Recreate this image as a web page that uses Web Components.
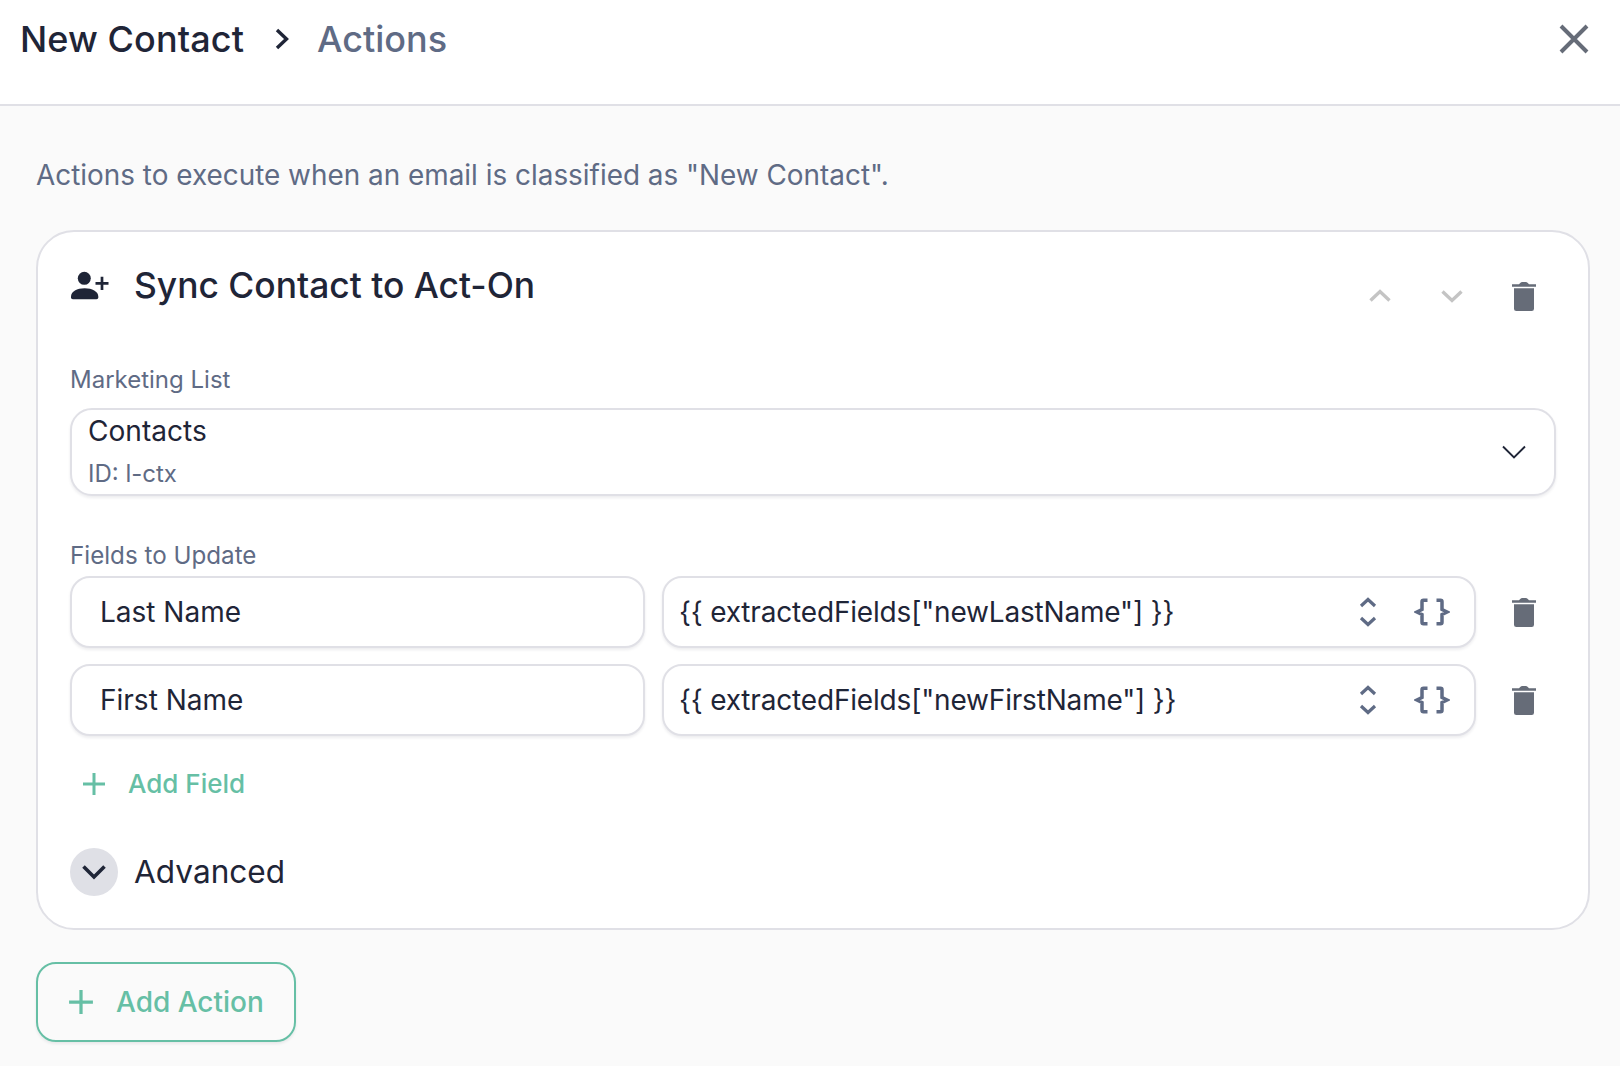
<!DOCTYPE html>
<html><head><meta charset="utf-8">
<style>
html,body{margin:0;padding:0;background:#fafafa;height:100%}
body{font-family:Inter,"Liberation Sans",sans-serif;color:#1f2537;overflow:hidden}
</style></head>
<body>
<template id="i-trash"><svg viewBox="-6 -3 36 36" width="36" height="36" fill="#666c78"><path d="M0 3.200H7l1.200-1.200q1-.9 2-.9h3.600q1 0 2 .9L17 3.200h7v2.600H0z"/><path d="M2 7.200h20v20.500q0 2.300-2.300 2.300H4.300Q2 30 2 27.700z"/></svg></template>
<app-page>
  <app-header slot="header" title="New Contact" sub="Actions"></app-header>
  <p-desc>Actions to execute when an email is classified as "New Contact".</p-desc>
  <action-card heading="Sync Contact to Act-On">
    <field-label>Marketing List</field-label>
    <select-box main="Contacts" sub="ID: l-ctx"></select-box>
    <field-label class="second">Fields to Update</field-label>
    <map-row name="Last Name" value='{{ extractedFields["newLastName"] }}'></map-row>
    <map-row name="First Name" value='{{ extractedFields["newFirstName"] }}'></map-row>
    <add-link>Add Field</add-link>
    <advanced-toggle>Advanced</advanced-toggle>
  </action-card>
  <add-button>Add Action</add-button>
</app-page>
<script>
const TRASH=document.getElementById('i-trash').innerHTML;
const PLUS=(s,w)=>`<svg viewBox="0 0 24 24" width="${s}" height="${s}" fill="none" stroke="#66bfa5" stroke-width="${w}"><path d="M12 1v22M1 12h22"/></svg>`;
function def(name,css,html){
  customElements.define(name,class extends HTMLElement{
    connectedCallback(){
      if(this.shadowRoot)return;
      const r=this.attachShadow({mode:'open'});
      r.innerHTML=`<style>${css}</style>`+html(this);
    }
  });
}
def('app-page',`:host{display:block;height:1066px;box-sizing:border-box}
 main{display:flex;flex-direction:column;align-items:stretch;padding:0 30px 0 36px}`,
 ()=>`<slot name="header"></slot><main><slot></slot></main>`);
def('app-header',`:host{display:flex;align-items:center;height:104px;box-sizing:content-box;background:#fff;border-bottom:2px solid #e0e0e6;padding:0 30px 0 20px;font-size:36px;font-weight:500;line-height:44px}
 .t{color:#1f2537;letter-spacing:.1px}.c{margin:0 25px 0 28px;display:flex}.s{color:#5f6b85}.x{margin-left:auto;display:flex}
 .inner{display:flex;align-items:center;width:100%;margin-top:-26px}`,
 e=>`<div class="inner"><span class="t">${e.getAttribute('title')}</span>
 <span class="c"><svg width="20" height="24" viewBox="0 0 20 24" fill="none" stroke="#1f2537" stroke-width="3.400"><path d="M5 3l9.500 9L5 21"/></svg></span>
 <span class="s">${e.getAttribute('sub')}</span>
 <span class="x"><svg width="32" height="32" viewBox="0 0 32 32" fill="none" stroke="#666c78" stroke-width="4"><path d="M3 3l26 26M29 3L3 29"/></svg></span></div>`);
def('p-desc',`:host{display:block;font-size:27.9px;line-height:40px;color:#5f6b85;margin-top:49px;margin-bottom:35px}`,()=>`<slot></slot>`);
def('action-card',`:host{display:block;background:#fff;border:2px solid #e0e0e6;border-radius:38px;padding:32px 32px 32px 32px}
 .head{display:flex;align-items:flex-start;height:100px}
 .ic{display:flex;width:63px;margin-top:7px;margin-left:1px}
 h2{margin:0;font-size:35.4px;font-weight:500;line-height:44px;color:#1f2537}
 .tools{margin-left:auto;display:flex;align-items:center;gap:36px;margin-top:14px;margin-right:14px}
 .tools svg{display:block}`,
 e=>`<div class="head"><span class="ic"><svg viewBox="0 0 38 30" width="38" height="30" fill="#1f2537"><circle cx="13.300" cy="7.300" r="6.500"/><path d="M0 25.500C0 20.500 6 17.300 13.700 17.300 21 17.300 27.300 20.500 27.300 25.500V26.500Q27.300 28.300 25.500 28.300H1.800Q0 28.300 0 26.500Z"/><path d="M24.500 12.300h13M31 5.700v13.200" fill="none" stroke="#1f2537" stroke-width="2.700"/></svg></span>
 <h2>${e.getAttribute('heading')}</h2>
 <div class="tools"><svg width="36" height="36" viewBox="0 0 36 36" fill="none" stroke="#c4c4c4" stroke-width="3.400"><path d="M8.500 22.500l9.500-9 9.500 9"/></svg><svg width="36" height="36" viewBox="0 0 36 36" fill="none" stroke="#c4c4c4" stroke-width="3.400"><path d="M8.500 13.500l9.500 9 9.500-9"/></svg>${TRASH}</div></div><slot></slot>`);
def('field-label',`:host{display:block;font-size:24px;line-height:32px;color:#5f6b85;margin-bottom:12px}
 :host(.second){font-size:24.2px;margin-top:44px;margin-bottom:4px}`,()=>`<slot></slot>`);
const BOX=`background:#fff;border:2px solid #e0e0e6;box-shadow:0 2px 3px rgba(20,25,50,.08);box-sizing:border-box;`;
def('select-box',`:host{display:flex;align-items:center;height:88px;border-radius:22px;${BOX}padding:0 27px 0 16px}
 .col{display:flex;flex-direction:column;flex:1}
 .m{font-size:28.1px;line-height:38px;margin-top:-2px}.s{font-size:24px;line-height:32px;color:#5f6b85;margin-top:8px}`,
 e=>`<div class="col"><span class="m">${e.getAttribute('main')}</span><span class="s">${e.getAttribute('sub')}</span></div>
 <svg width="26" height="16" viewBox="0 0 26 16" fill="none" stroke="#1f2537" stroke-width="1.900"><path d="M2 2.500l11 11 11-11"/></svg>`);
def('map-row',`:host{display:flex;align-items:center;gap:17px;margin-bottom:16px;height:72px}
 .box{flex:none;height:72px;border-radius:20px;${BOX}display:flex;align-items:center;font-size:28px;line-height:36px}
 .n{width:575px;padding-left:28px}
 .v{width:814px;padding:0 24px 0 15px}
 .t{letter-spacing:-.18px}
 .ic{margin-left:auto;display:flex;align-items:center;gap:37px}
 .tr{display:flex;margin-left:13px;margin-top:-1px}`,
 e=>`<div class="box n">${e.getAttribute('name')}</div>
 <div class="box v"><span class="t">${e.getAttribute('value').replace(/"/g,'&quot;')}</span><span class="ic">
 <svg width="18" height="32" viewBox="0 0 18 32" fill="none" stroke="#5f6b85" stroke-width="3.200"><path d="M2 10L9 3.500l7 6.500M2 22L9 28.500l7-6.500"/></svg>
 <svg width="36" height="30" viewBox="0 0 36 30" fill="none" stroke="#5f6b85" stroke-width="3.500"><path d="M13.500 3.200H9.500Q8 3.200 8 4.700V12.500L3 15 8 17.500V25.300Q8 26.800 9.500 26.800H13.500M22.500 3.200H26.500Q28 3.200 28 4.700V12.500L33 15 28 17.500V25.300Q28 26.800 26.500 26.800H22.500"/></svg></span></div>
 <span class="tr">${TRASH}</span>`);
def('add-link',`:host{display:flex;align-items:center;gap:22px;color:#66bfa5;font-size:26px;font-weight:500;line-height:36px;margin:29.500px 0 0 12px}`,
 ()=>`${PLUS(24,3)}<slot></slot>`);
def('advanced-toggle',`:host{display:flex;align-items:center;gap:16px;font-size:31.6px;line-height:48px;margin-top:46px;color:#1f2537}
 .c{width:48px;height:48px;border-radius:50%;background:#dfe0e6;display:flex;align-items:center;justify-content:center}`,
 ()=>`<span class="c"><svg width="26" height="16" viewBox="0 0 26 16" fill="none" stroke="#1f2537" stroke-width="3.600"><path d="M2.500 2.500l10.500 10.500 10.500-10.500"/></svg></span><slot></slot>`);
def('add-button',`:host{display:inline-flex;align-self:flex-start;align-items:center;gap:22px;box-sizing:border-box;width:260px;height:80px;border:2px solid #66bfa5;border-radius:20px;color:#66bfa5;font-size:28px;font-weight:500;padding-left:30px;margin-top:32px;box-shadow:0 2px 3px rgba(20,25,50,.08)}`,
 ()=>`${PLUS(26,3)}<slot></slot>`);
</script>
</body></html>
